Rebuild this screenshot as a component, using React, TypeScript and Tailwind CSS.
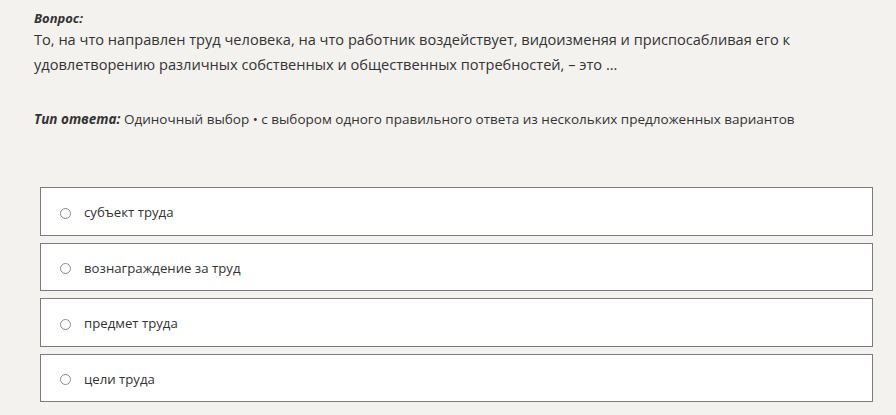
import React from 'react';

const options = ['субъект труда', 'вознаграждение за труд', 'предмет труда', 'цели труда'];

export default function App() {
    return (
        <div className="min-h-[415px] w-[896px] bg-[#f3f2ef] text-[#333333] pl-[34px] pr-[23px] pt-[9px]" style={{ fontFamily: '"Open Sans", "Noto Sans", sans-serif' }}>
            <p className="text-[13px] font-bold italic leading-[18px]">Вопрос:</p>
            <p className="text-[14.6px] leading-[25px] w-[780px]">
                То, на что направлен труд человека, на что работник воздействует, видоизменяя и приспосабливая его к удовлетворению различных собственных и общественных потребностей, – это ...
            </p>
            <p className="mt-[32px] text-[13.5px] leading-[20px]">
                <span className="font-bold italic">Тип ответа:</span> Одиночный выбор • с выбором одного правильного ответа из нескольких предложенных вариантов
            </p>
            <div className="mt-[58px] ml-[6px] flex flex-col gap-[7px]">
                {options.map(opt => (
                    <div key={opt} className="h-[48.5px] bg-white border border-[#7b7b7b] flex items-center pt-[4px] pl-[19px] gap-[13px]">
                        <span className="h-[11px] w-[11px] rounded-full border border-[#8a8a8a] bg-white" />
                        <span className="text-[13.2px]">{opt}</span>
                    </div>
                ))}
            </div>
        </div>
    );
}
